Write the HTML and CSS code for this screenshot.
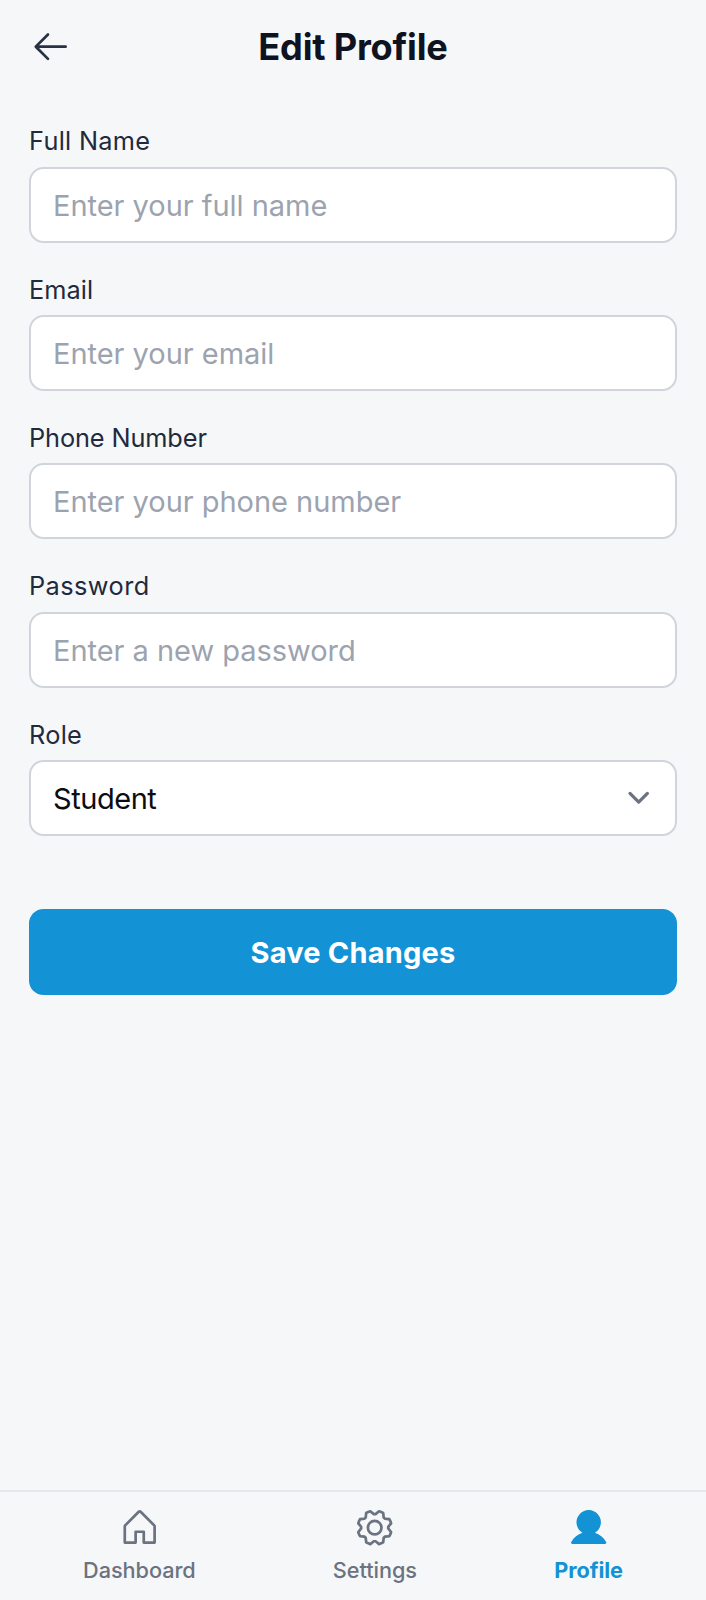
FILE: index.html
```html
<!DOCTYPE html>
<html lang="en">
<head>
<meta charset="utf-8">
<title>Edit Profile</title>
<link rel="stylesheet" href="styles.css">
</head>
<body>
<div class="screen">
  <header class="header">
    <button class="back" type="button" aria-label="Back">
      <svg class="icon" viewBox="0 0 256 256"><path d="M224,128a8,8,0,0,1-8,8H59.31l58.35,58.34a8,8,0,0,1-11.32,11.32l-72-72a8,8,0,0,1,0-11.32l72-72a8,8,0,0,1,11.32,11.32L59.31,120H216A8,8,0,0,1,224,128Z"/></svg>
    </button>
    <h1 class="title">Edit Profile</h1>
  </header>
  <form class="form">
    <label class="field"><span class="label">Full Name</span><input class="control" type="text" placeholder="Enter your full name"></label>
    <label class="field"><span class="label label-email">Email</span><input class="control" type="email" placeholder="Enter your email"></label>
    <label class="field"><span class="label label-phone">Phone Number</span><input class="control" type="tel" placeholder="Enter your phone number"></label>
    <label class="field"><span class="label label-password">Password</span><input class="control" type="password" placeholder="Enter a new password"></label>
    <div class="field">
      <span class="label">Role</span>
      <div class="control select">
        <span class="value">Student</span>
        <svg class="chevron" viewBox="0 0 20 20"><path d="M6 8l4 4 4-4"/></svg>
      </div>
    </div>
    <button class="save" type="button">Save Changes</button>
  </form>
  <nav class="nav">
    <a class="tab">
      <svg class="icon" viewBox="0 0 256 256"><path d="M219.31,108.68l-80-80a16,16,0,0,0-22.62,0l-80,80A15.87,15.87,0,0,0,32,120v96a8,8,0,0,0,8,8h64a8,8,0,0,0,8-8V160h32v56a8,8,0,0,0,8,8h64a8,8,0,0,0,8-8V120A15.87,15.87,0,0,0,219.31,108.68ZM208,208H160V152a8,8,0,0,0-8-8H104a8,8,0,0,0-8,8v56H48V120l80-80,80,80Z"/></svg>
      <span>Dashboard</span>
    </a>
    <a class="tab">
      <svg class="icon" viewBox="0 0 256 256"><path d="M128,80a48,48,0,1,0,48,48A48.05,48.05,0,0,0,128,80Zm0,80a32,32,0,1,1,32-32A32,32,0,0,1,128,160Zm88-29.84q.06-2.16,0-4.32l14.92-18.64a8,8,0,0,0,1.48-7.06,107.21,107.21,0,0,0-10.88-26.25,8,8,0,0,0-6-3.93l-23.72-2.64q-1.48-1.56-3-3L186,40.54a8,8,0,0,0-3.94-6,107.71,107.71,0,0,0-26.25-10.87,8,8,0,0,0-7.06,1.49L130.16,40Q128,40,125.84,40L107.2,25.11a8,8,0,0,0-7.06-1.48A107.6,107.6,0,0,0,73.89,34.51a8,8,0,0,0-3.93,6L67.32,64.27q-1.56,1.49-3,3L40.54,70a8,8,0,0,0-6,3.94,107.71,107.71,0,0,0-10.87,26.25,8,8,0,0,0,1.49,7.06L40,125.84Q40,128,40,130.16L25.11,148.8a8,8,0,0,0-1.48,7.06,107.21,107.21,0,0,0,10.88,26.25,8,8,0,0,0,6,3.93l23.72,2.64q1.49,1.56,3,3L70,215.46a8,8,0,0,0,3.94,6,107.71,107.71,0,0,0,26.25,10.87,8,8,0,0,0,7.06-1.49L125.84,216q2.16.06,4.32,0l18.64,14.92a8,8,0,0,0,7.06,1.48,107.21,107.21,0,0,0,26.25-10.88,8,8,0,0,0,3.93-6l2.64-23.72q1.56-1.48,3-3L215.46,186a8,8,0,0,0,6-3.94,107.71,107.71,0,0,0,10.87-26.25,8,8,0,0,0-1.49-7.06Zm-16.1-6.5a73.93,73.93,0,0,1,0,8.68,8,8,0,0,0,1.74,5.48l14.19,17.73a91.57,91.57,0,0,1-6.23,15L187,173.11a8,8,0,0,0-5.1,2.64,74.11,74.11,0,0,1-6.14,6.14,8,8,0,0,0-2.64,5.1l-2.51,22.58a91.32,91.32,0,0,1-15,6.23l-17.74-14.19a8,8,0,0,0-5-1.75h-.48a73.93,73.93,0,0,1-8.68,0,8,8,0,0,0-5.48,1.74L100.45,215.8a91.57,91.57,0,0,1-15-6.23L82.89,187a8,8,0,0,0-2.64-5.1,74.11,74.11,0,0,1-6.14-6.14,8,8,0,0,0-5.1-2.64L46.43,170.6a91.32,91.32,0,0,1-6.23-15l14.19-17.74a8,8,0,0,0,1.74-5.48,73.93,73.93,0,0,1,0-8.68,8,8,0,0,0-1.74-5.48L40.2,100.45a91.57,91.57,0,0,1,6.23-15L69,82.89a8,8,0,0,0,5.1-2.64,74.11,74.11,0,0,1,6.14-6.14A8,8,0,0,0,82.89,69L85.4,46.43a91.32,91.32,0,0,1,15-6.23l17.74,14.19a8,8,0,0,0,5.48,1.74,73.93,73.93,0,0,1,8.68,0,8,8,0,0,0,5.48-1.74L155.55,40.2a91.57,91.57,0,0,1,15,6.23L173.11,69a8,8,0,0,0,2.64,5.1,74.11,74.11,0,0,1,6.14,6.14,8,8,0,0,0,5.1,2.64l22.58,2.51a91.32,91.32,0,0,1,6.23,15l-14.19,17.74A8,8,0,0,0,199.87,123.66Z"/></svg>
      <span>Settings</span>
    </a>
    <a class="tab tab-active">
      <svg class="icon" viewBox="0 0 256 256"><path d="M230.93,220a8,8,0,0,1-6.93,4H32a8,8,0,0,1-6.92-12c15.23-26.33,38.7-45.21,66.09-54.16a72,72,0,1,1,73.66,0c27.39,8.95,50.86,27.83,66.09,54.16A8,8,0,0,1,230.93,220Z"/></svg>
      <span>Profile</span>
    </a>
  </nav>
</div>
</body>
</html>
```
FILE: styles.css
```css
* { box-sizing: border-box; }
body { margin: 0; font-family: Inter, sans-serif; background: #f6f7f9; }
.screen { display: flex; flex-direction: column; height: 1600px; }
.header { display: flex; align-items: center; height: 94.2px; padding: 0 29px; }
.back { display: flex; padding: 0; border: 0; background: none; color: #283244; }
.icon { display: block; width: 43.4px; height: 43.4px; fill: currentColor; }
.title { flex: 1; margin: 0; padding-right: 43.4px; text-align: center; font-size: 36.2px; line-height: 50px; font-weight: 700; letter-spacing: -0.2px; color: #0d1321; }
.form { flex: 1; display: flex; flex-direction: column; gap: 29px; padding: 29px 29px 0; }
.field { display: flex; flex-direction: column; gap: 7.4px; }
.label { font-size: 25.3px; line-height: 36px; font-weight: 400; letter-spacing: 0.3px; color: #1f2a3d; }
.label-email { letter-spacing: 0.1px; }
.label-phone { letter-spacing: -0.1px; }
.label-password { letter-spacing: 0.45px; }
.control { width: 100%; height: 76px; padding: 1px 22px 0; border: 2px solid #d1d5db; border-radius: 14.5px; background: #fff; font-family: inherit; font-size: 29px; letter-spacing: -0.03px; color: #0d1321; }
.control::placeholder { color: #9ca3af; opacity: 1; }
.select { display: flex; align-items: center; justify-content: space-between; padding: 0 14.5px 0 22px; letter-spacing: -0.45px; color: #0b0d12; }
.value { padding-top: 1px; }
.chevron { width: 43.4px; height: 43.4px; fill: none; stroke: #6b7280; stroke-width: 1.5; stroke-linecap: round; stroke-linejoin: round; }
.save { height: 86.5px; margin-top: 43.8px; border: 0; border-radius: 14.5px; background: #1392d5; color: #fff; font-family: inherit; font-size: 29px; font-weight: 700; letter-spacing: 0.2px; }
.nav { display: flex; justify-content: space-around; height: 110px; padding: 13.5px 14.5px 0; border-top: 2px solid #e5e7eb; }
.tab { display: flex; flex-direction: column; align-items: center; gap: 7.2px; font-size: 21.7px; line-height: 29px; font-weight: 500; letter-spacing: -0.05px; color: #6b7280; }
.tab-active { font-weight: 700; color: #1392d5; }
```
